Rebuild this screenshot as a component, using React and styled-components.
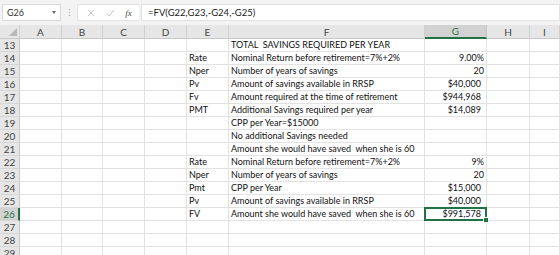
import React from "react";
import styled, { createGlobalStyle, css } from "styled-components";

const Global = createGlobalStyle`
  html, body { margin: 0; padding: 0; background: #ffffff; }
  body { font-family: Lato, "Liberation Sans", Arial, sans-serif; overflow: hidden; }
`;

const Window = styled.div`
  width: 560px;
  height: 255px;
  overflow: hidden;
  background: #f3f3f3;
`;

const FormulaBar = styled.div`
  height: 25px;
  display: flex;
  align-items: center;
  padding: 0 0 0 2px;
  box-sizing: border-box;
`;

const NameBox = styled.div`
  width: 59px;
  height: 17px;
  box-sizing: border-box;
  background: #fff;
  border: 1px solid #dadada;
  display: flex;
  align-items: center;
  justify-content: space-between;
  padding: 0 4px 0 4px;
  font-size: 9px;
  color: #333;
`;

const Caret = styled.span`
  width: 0;
  height: 0;
  border-left: 2.5px solid transparent;
  border-right: 2.5px solid transparent;
  border-top: 3px solid #666;
`;

const Grip = styled.div`
  width: 16px;
  display: flex;
  justify-content: center;
  svg { display: block; }
`;

const FxBox = styled.div`
  width: 62px;
  height: 17px;
  box-sizing: border-box;
  background: #fff;
  border: 1px solid #e2e2e2;
  border-right: none;
  display: flex;
  align-items: center;
  justify-content: space-around;
  padding: 0 2px 0 4px;
`;

const FxText = styled.span`
  font-family: "Liberation Serif", serif;
  font-style: italic;
  font-size: 9px;
  color: #444;
`;

const FormulaInput = styled.div`
  flex: 1;
  height: 17px;
  box-sizing: border-box;
  background: #fff;
  border: 1px solid #e2e2e2;
  margin-left: 2px;
  display: flex;
  align-items: center;
  padding-left: 6px;
  font-size: 9.5px;
  color: #222;
`;

const Sheet = styled.div`
  display: grid;
  grid-template-columns: 20px 42px 41px 42px 42px 42px 196px 62px 43px 1fr;
  grid-auto-rows: 13px;
  grid-template-rows: 14px;
  background: #fff;
`;

const ColHead = styled.div`
  background: ${(p) => (p.$active ? "#d2d2d2" : "#e6e6e6")};
  border-right: 1px solid ${(p) => (p.$active ? "#c6c6c6" : "#d0d0d0")};
  border-bottom: ${(p) => (p.$active ? "2px solid #217346" : "1px solid #c8c8c8")};
  box-sizing: border-box;
  font-size: 10px;
  color: ${(p) => (p.$active ? "#217346" : "#444")};
  display: flex;
  align-items: center;
  justify-content: center;
`;

const Corner = styled(ColHead)`
  position: relative;
  &::after {
    content: "";
    position: absolute;
    right: 2px;
    bottom: 2px;
    width: 0;
    height: 0;
    border-left: 8px solid transparent;
    border-bottom: 8px solid #b8b8b8;
  }
`;

const RowHead = styled.div`
  background: ${(p) => (p.$active ? "#d2d2d2" : "#e6e6e6")};
  border-right: ${(p) => (p.$active ? "2px solid #217346" : "1px solid #c8c8c8")};
  border-bottom: 1px solid #d6d6d6;
  box-sizing: border-box;
  font-size: 10px;
  line-height: 12px;
  color: ${(p) => (p.$active ? "#217346" : "#444")};
  text-align: center;
`;

const Cell = styled.div`
  position: relative;
  border-right: 1px solid #e2e2e2;
  border-bottom: 1px solid #e2e2e2;
  box-sizing: border-box;
  font-size: 9px;
  line-height: 12px;
  color: #111;
  white-space: pre;
  overflow: visible;
  padding: 0 2px;
  text-align: ${(p) => (p.$right ? "right" : "left")};
  ${(p) => p.$acct && css`padding-right: 5px;`}
  ${(p) =>
    p.$selected &&
    css`
      &::after {
        content: "";
        position: absolute;
        left: -1px;
        top: -1px;
        right: -1px;
        bottom: -1px;
        border: 2px solid #217346;
        pointer-events: none;
      }
      &::before {
        content: "";
        position: absolute;
        right: -3px;
        bottom: -3px;
        width: 4px;
        height: 4px;
        background: #217346;
        border: 1px solid #fff;
        z-index: 2;
      }
    `}
`;

const cols = ["A", "B", "C", "D", "E", "F", "G", "H", "I"];

const data = {
  13: { F: "TOTAL  SAVINGS REQUIRED PER YEAR" },
  14: { E: "Rate", F: "Nominal Return before retirement=7%+2%", G: ["9.00%", false] },
  15: { E: "Nper", F: "Number of years of savings", G: ["20", false] },
  16: { E: "Pv", F: "Amount of savings available in RRSP", G: ["$40,000", true] },
  17: { E: "Fv", F: "Amount required at the time of retirement", G: ["$944,968", true] },
  18: { E: "PMT", F: "Additional Savings required per year", G: ["$14,089", true] },
  19: { F: "CPP per Year=$15000" },
  20: { F: "No additional Savings needed" },
  21: { F: "Amount she would have saved  when she is 60" },
  22: { E: "Rate", F: "Nominal Return before retirement=7%+2%", G: ["9%", false] },
  23: { E: "Nper", F: "Number of years of savings", G: ["20", false] },
  24: { E: "Pmt", F: "CPP per Year", G: ["$15,000", true] },
  25: { E: "Pv", F: "Amount of savings available in RRSP", G: ["$40,000", true] },
  26: { E: "FV", F: "Amount she would have saved  when she is 60", G: ["$991,578", true] },
  27: {},
  28: {},
  29: {},
};

function Row({ n }) {
  const r = data[n];
  return (
    <>
      <RowHead $active={n === 26}>{n}</RowHead>
      {cols.map((c) => {
        const v = r[c];
        if (c === "G" && v) {
          return (
            <Cell key={c} $right $acct={v[1]} $selected={n === 26}>
              {v[0]}
            </Cell>
          );
        }
        return (
          <Cell key={c} $selected={n === 26 && c === "G"}>
            {v || ""}
          </Cell>
        );
      })}
    </>
  );
}

export default function App() {
  return (
    <Window>
      <Global />
      <FormulaBar>
        <NameBox>
          <span>G26</span>
          <Caret />
        </NameBox>
        <Grip>
          <svg width="3" height="9" viewBox="0 0 3 9">
            <circle cx="1.5" cy="1.5" r="0.8" fill="#bbb" />
            <circle cx="1.5" cy="4.5" r="0.8" fill="#bbb" />
            <circle cx="1.5" cy="7.5" r="0.8" fill="#bbb" />
          </svg>
        </Grip>
        <FxBox>
          <svg width="8" height="8" viewBox="0 0 8 8">
            <path d="M1 1 L7 7 M7 1 L1 7" stroke="#c4c4c4" strokeWidth="1" />
          </svg>
          <svg width="9" height="8" viewBox="0 0 9 8">
            <path d="M1 4.5 L3.3 7 L8 1" stroke="#c4c4c4" strokeWidth="1" fill="none" />
          </svg>
          <FxText>fx</FxText>
        </FxBox>
        <FormulaInput>=FV(G22,G23,-G24,-G25)</FormulaInput>
      </FormulaBar>
      <Sheet>
        <Corner />
        {cols.map((c) => (
          <ColHead key={c} $active={c === "G"}>
            {c}
          </ColHead>
        ))}
        {Object.keys(data).map((n) => (
          <Row key={n} n={Number(n)} />
        ))}
      </Sheet>
    </Window>
  );
}
